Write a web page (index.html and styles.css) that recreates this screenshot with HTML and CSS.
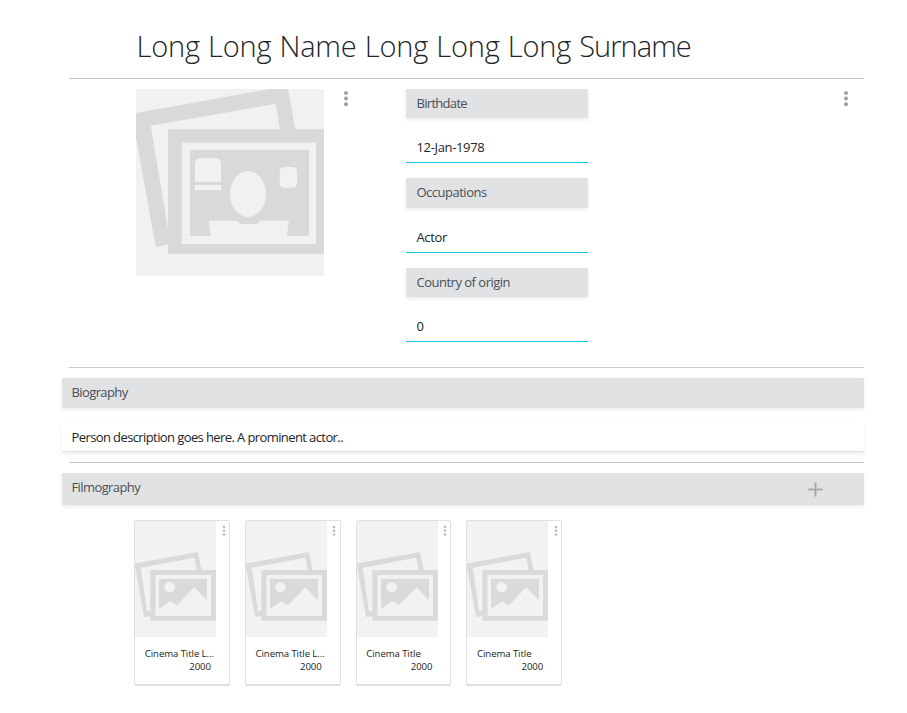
FILE: index.html
```
<!DOCTYPE html>
<html lang="en">
<head>
<meta charset="utf-8">
<title>Person</title>
<link rel="stylesheet" href="styles.css">
</head>
<body>
<svg class="defs" aria-hidden="true">
  <symbol id="cover" viewBox="0 0 81 116">
    <rect width="81" height="116" fill="#f2f2f2"/>
    <path fill="#dadada" fill-rule="evenodd" d="M0 42.6 63 31 66.4 49H81V99.7H15.3V94.9L9 96 0 45ZM5.8 46.7 12 90.3 15.3 89.7V49H61.7L59.3 36.7Z"/>
    <rect x="20.5" y="54" width="55.5" height="41" fill="#f2f2f2"/>
    <path fill="#dadada" d="M24 57.7H72V79.3L59.3 66.3 42 84.3 35.3 80.3 24 87.7Z"/>
    <circle cx="34.7" cy="66.3" r="5.2" fill="#f2f2f2"/>
  </symbol>
  <symbol id="dots" viewBox="0 0 6 18">
    <circle cx="3" cy="3" r="2"/><circle cx="3" cy="8.6" r="2"/><circle cx="3" cy="14.3" r="2"/>
  </symbol>
</svg>
<main class="page">
  <h1 class="title">Long Long Name Long Long Long <span class="surname">Surname</span></h1>
  <section class="profile">
    <svg class="photo" viewBox="0 0 188 187">
      <rect width="188" height="187" fill="#f1f1f1"/>
      <path fill="#d9d9d9" d="M0 24 134 0H152L159.5 41H144L139.7 14.7 14.7 36.7 32 140V155.6L19.7 158 0 48Z"/>
      <path fill="#d9d9d9" fill-rule="evenodd" d="M32 40.3H188V165H32ZM45.7 53.5V155H180V53.5Z"/>
      <rect x="54" y="60.8" width="119" height="86.2" fill="#d9d9d9"/>
      <g fill="#f1f1f1">
        <path d="M59 93V75Q59 69 65 69H79Q85 69 85 75V93ZM59 96H85V101H59Z"/>
        <ellipse cx="112" cy="105" rx="18" ry="23"/>
        <rect x="143.7" y="78" width="17.3" height="20.7" rx="4.5"/>
        <path d="M72.7 131.7H100.7L104.5 135H121L124.3 131.7H153L150.7 147.5H74.7Z"/>
      </g>
    </svg>
    <svg class="dots"><use href="#dots"/></svg>
    <div class="fields">
      <div class="label">Birthdate</div><div class="value">12-Jan-1978</div>
      <div class="label tall">Occupations</div><div class="value">Actor</div>
      <div class="label">Country of origin</div><div class="value">0</div>
    </div>
    <svg class="dots end"><use href="#dots"/></svg>
  </section>
  <section class="biography">
    <h2 class="bar">Biography</h2>
    <p class="text">Person description goes here. A prominent actor..</p>
  </section>
  <section class="filmography">
    <h2 class="bar large"><span>Filmography</span>
      <svg class="plus" viewBox="0 0 15 15"><path class="halo" d="M7.5 0V15M0 7.5H15"/><path class="stroke" d="M7.5 1V14M1 7.5H14"/></svg>
    </h2>
    <div class="cards">
      <article class="card"><div class="top"><svg class="cover"><use href="#cover"/></svg><svg class="mini" viewBox="0 0 6 18"><use href="#dots"/></svg></div><div class="name">Cinema Title L...</div><div class="year">2000</div></article>
      <article class="card"><div class="top"><svg class="cover"><use href="#cover"/></svg><svg class="mini" viewBox="0 0 6 18"><use href="#dots"/></svg></div><div class="name">Cinema Title L...</div><div class="year">2000</div></article>
      <article class="card"><div class="top"><svg class="cover"><use href="#cover"/></svg><svg class="mini" viewBox="0 0 6 18"><use href="#dots"/></svg></div><div class="name">Cinema Title</div><div class="year">2000</div></article>
      <article class="card"><div class="top"><svg class="cover"><use href="#cover"/></svg><svg class="mini" viewBox="0 0 6 18"><use href="#dots"/></svg></div><div class="name">Cinema Title</div><div class="year">2000</div></article>
    </div>
  </section>
</main>
</body>
</html>
```
FILE: styles.css
```
* { box-sizing: border-box; }
body {
  margin: 0;
  background: #fff;
  color: #212529;
  font: 13px/20px "Open Sans", "Noto Sans", sans-serif;
  letter-spacing: -0.42px;
}
.defs { display: none; }
.page { width: 802px; margin-left: 62px; }
.title {
  height: 79px;
  margin: 0 0 0 7px;
  padding: 25px 0 0 67.5px;
  border-bottom: 1px solid #c8c8c8;
  font-size: 29px;
  line-height: 42px;
  font-weight: 300;
  letter-spacing: -0.2px;
  word-spacing: 0.9px;
  white-space: nowrap;
}
.surname { letter-spacing: -0.95px; }
.profile {
  display: flex;
  align-items: flex-start;
  height: 289px;
  margin-left: 7px;
  padding: 10px 0 0 67px;
  border-bottom: 1px solid #c8c8c8;
}
.photo { width: 188px; height: 187px; }
.dots { width: 6px; height: 18px; margin: 1px 0 0 19px; fill: #a0a0a0; }
.dots.end { margin: 1px 15px 0 auto; }
.fields { width: 182px; margin-left: 57px; }
.label, .bar, .text { box-shadow: 0 2px 4px rgba(0, 0, 0, .075); }
.label {
  height: 29px;
  padding: 4px 10.5px;
  background: #e1e2e4;
  color: #495057;
  letter-spacing: -0.5px;
}
.label:first-child { letter-spacing: -0.7px; }
.label.tall { height: 30px; }
.value {
  height: 45px;
  margin-bottom: 15px;
  padding: 19px 10.5px 0;
  border-bottom: 1px solid #12c4e9;
  letter-spacing: -0.35px;
}
.biography { height: 95px; padding-top: 10px; }
.biography::after {
  content: "";
  display: block;
  height: 1px;
  margin: 10px 0 0 7px;
  background: #c8c8c8;
}
.bar {
  height: 30px;
  margin: 0;
  padding: 4px 9.5px;
  background: #e1e2e4;
  color: #495057;
  font-size: 13px;
  font-weight: 400;
  letter-spacing: -0.6px;
}
.text {
  height: 29px;
  margin: 15px 0 0;
  padding: 4px 9.5px 0;
  border-bottom: 1px solid #dee0e2;
  line-height: 20px;
  letter-spacing: -0.6px;
}
.filmography { padding-top: 10px; }
.bar.large {
  display: flex;
  justify-content: space-between;
  height: 32px;
}
.plus { width: 15px; height: 15px; margin: 5px 31.5px 0 0; }
.plus .halo { stroke: #c8c9ca; stroke-width: 3; }
.plus .stroke { stroke: #a3a4a5; stroke-width: 1; }
.cards {
  display: grid;
  grid-template-columns: repeat(4, 95.75px);
  gap: 15px;
  margin: 15px 0 0 72.2px;
}
.card {
  height: 166px;
  border: 1px solid #dee0e3;
  border-bottom-width: 2px;
  border-radius: 2px;
  font-size: 9.6px;
  line-height: 13px;
  letter-spacing: -0.08px;
}
.top { display: flex; height: 116px; }
.cover { width: 81px; height: 116px; }
.mini { width: 4px; height: 12px; margin: 4px 0 0 5.4px; fill: #bcbcbc; }
.name { margin: 10px 0 0 9.6px; white-space: nowrap; }
.year { padding-right: 18px; text-align: right; }
```
